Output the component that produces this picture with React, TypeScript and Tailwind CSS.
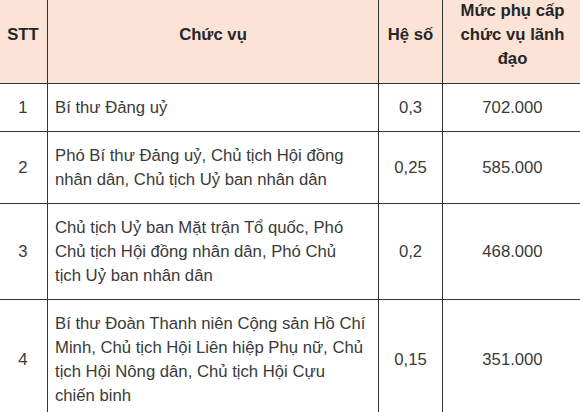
const rows = [
  { stt: "1", title: ["Bí thư Đảng uỷ"], coef: "0,3", amount: "702.000" },
  {
    stt: "2",
    title: ["Phó Bí thư Đảng uỷ, Chủ tịch Hội đồng", "nhân dân, Chủ tịch Uỷ ban nhân dân"],
    coef: "0,25",
    amount: "585.000",
  },
  {
    stt: "3",
    title: [
      "Chủ tịch Uỷ ban Mặt trận Tổ quốc, Phó",
      "Chủ tịch Hội đồng nhân dân, Phó Chủ",
      "tịch Uỷ ban nhân dân",
    ],
    coef: "0,2",
    amount: "468.000",
  },
  {
    stt: "4",
    title: [
      "Bí thư Đoàn Thanh niên Cộng sản Hồ Chí",
      "Minh, Chủ tịch Hội Liên hiệp Phụ nữ, Chủ",
      "tịch Hội Nông dân, Chủ tịch Hội Cựu",
      "chiến binh",
    ],
    coef: "0,15",
    amount: "351.000",
  },
];

export default function App() {
  return (
    <div className="w-[580px] h-[412px] overflow-hidden bg-white font-['Liberation_Sans',Arial,sans-serif] text-[16.7px] leading-[24px] text-[#3a3a3a]">
      <div className="-mt-[14px] -ml-[2px]">
        <table className="w-[584px] border-collapse table-fixed">
          <colgroup>
            <col className="w-[49px]" />
            <col className="w-[331px]" />
            <col className="w-[64px]" />
            <col className="w-[140px]" />
          </colgroup>
          <thead>
            <tr className="bg-[#fbe4d6] font-bold text-[#262626]">
              <th className="border border-[#333] py-3 text-center align-middle">STT</th>
              <th className="border border-[#333] py-3 text-center align-middle">Chức vụ</th>
              <th className="border border-[#333] py-3 text-center align-middle">Hệ số</th>
              <th className="border border-[#333] py-3 px-1 text-center align-middle">
                Mức phụ cấp
                <br />
                chức vụ lãnh
                <br />
                đạo
              </th>
            </tr>
          </thead>
          <tbody>
            {rows.map((row) => (
              <tr key={row.stt}>
                <td className="border border-[#333] pt-3 pb-[11px] text-center align-middle">{row.stt}</td>
                <td className="border border-[#333] pt-3 pb-[11px] pl-[7px] pr-1 align-middle whitespace-nowrap">
                  {row.title.map((line, i) => (
                    <div key={i}>{line}</div>
                  ))}
                </td>
                <td className="border border-[#333] pt-3 pb-[11px] text-center align-middle">{row.coef}</td>
                <td className="border border-[#333] pt-3 pb-[11px] text-center align-middle">{row.amount}</td>
              </tr>
            ))}
          </tbody>
        </table>
      </div>
    </div>
  );
}
